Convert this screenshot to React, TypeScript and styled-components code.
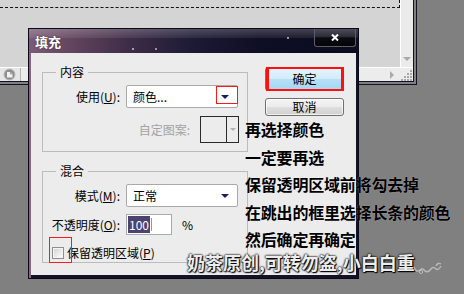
import React from "react";
import styled, { createGlobalStyle } from "styled-components";

const UI_FONT = `"Noto Sans CJK SC", "Noto Sans", "Liberation Sans", sans-serif`;

const GlobalStyle = createGlobalStyle`
  html, body { margin: 0; padding: 0; }
  body {
    background: #808080;
    width: 464px;
    height: 294px;
    overflow: hidden;
    font-family: ${UI_FONT};
  }
  * { box-sizing: border-box; }
`;

const Desktop = styled.div`
  position: relative;
  width: 464px;
  height: 294px;
  background: #808080;
  overflow: hidden;
`;

/* ---------- document window behind ---------- */
const DocWindow = styled.div`
  width: 417px;
  height: 85px;
  display: grid;
  grid-template-columns: 400px 13px;
  grid-template-rows: 67px 14px;
  border-right: 4px double #121222;
  border-bottom: 4px double #121222;
  background: #808080;
`;

const Canvas = styled.div`
  background: #d4d4d4;
`;

const Selection = styled.div`
  width: 400px;
  height: 8px;
  border-bottom: 1px dashed #111;
  border-right: 1px dashed #111;
`;

const VScroll = styled.div`
  background: #ebebeb;
  border-left: 1px solid #ffffff;
  display: flex;
  flex-direction: column;
  justify-content: flex-end;
  align-items: center;
  padding-bottom: 6px;
`;

const ArrowDown = styled.div<{ $color?: string; $size?: number }>`
  width: 0;
  height: 0;
  border-left: ${(p) => p.$size ?? 4}px solid transparent;
  border-right: ${(p) => p.$size ?? 4}px solid transparent;
  border-top: ${(p) => p.$size ?? 4}px solid ${(p) => p.$color ?? "#a9a9a9"};
`;

const StatusBar = styled.div`
  background: #e6e6e6;
  border-top: 1px solid #ffffff;
  display: flex;
  align-items: stretch;
`;

const StatusIconCell = styled.div`
  width: 21px;
  border-right: 1px solid #b4b4b4;
  display: flex;
  align-items: center;
  padding-left: 3px;
`;

const StatusRest = styled.div`
  flex: 1;
  display: flex;
  align-items: center;
  justify-content: flex-end;
  padding-right: 6px;
  background: #ececec;
`;

const ArrowRight = styled.div`
  width: 0;
  height: 0;
  border-top: 4px solid transparent;
  border-bottom: 4px solid transparent;
  border-left: 4px solid #a9a9a9;
`;

const Grip = styled.div`
  background: #ececec;
  border-top: 1px solid #ffffff;
  display: flex;
  align-items: flex-end;
  justify-content: flex-end;
`;

/* ---------- dialog ---------- */
const Dialog = styled.div`
  position: absolute;
  left: 28px;
  top: 28px;
  width: 331px;
  height: 251px;
  border: 1px solid #0b0b18;
  display: flex;
  flex-direction: column;
  font-family: ${UI_FONT};
  font-size: 12px;
  color: #000;
`;

const TitleBar = styled.div`
  height: 24px;
  flex: none;
  display: flex;
  align-items: flex-start;
  background:
    radial-gradient(circle at 104px 20px, rgba(255,255,255,0.55) 0 0.8px, transparent 1.4px),
    radial-gradient(circle at 127px 20px, rgba(255,255,255,0.5) 0 0.8px, transparent 1.4px),
    radial-gradient(circle at 259px 9px, rgba(255,255,255,0.55) 0 0.8px, transparent 1.4px),
    linear-gradient(180deg, rgba(255,255,255,0.22) 0, rgba(255,255,255,0.08) 36%, rgba(0,0,0,0) 40%),
    linear-gradient(90deg, #7c5b78 0, #64465f 12%, #3e2d48 30%, #1c1a34 50%, #0e0e24 70%, #0c0c20 100%);
`;

const Title = styled.div`
  color: #ffffff;
  font-weight: 700;
  font-size: 13px;
  line-height: 16px;
  padding: 5px 0 0 6px;
  text-shadow: 0 0 2px rgba(0, 0, 0, 0.5);
`;

const CloseBtn = styled.div`
  margin-left: auto;
  margin-right: 2px;
  width: 42px;
  height: 18px;
  border: 1px solid #5d5d68;
  border-top: none;
  border-radius: 0 0 3px 3px;
  background: linear-gradient(180deg, #4c4c58 0, #2c2c38 45%, #0a0a10 52%, #050508 100%);
  display: flex;
  align-items: center;
  justify-content: center;
`;

const Frame = styled.div`
  flex: 1;
  padding: 0 2px 3px 2px;
  background: linear-gradient(90deg, #86667f 0 2px, #121228 2px);
  display: flex;
`;

const Body = styled.div`
  flex: 1;
  background: #ececec;
  display: flex;
  align-items: flex-start;
  padding: 19px 0 0 11px;
`;

const Groups = styled.div`
  width: 206px;
  display: flex;
  flex-direction: column;
  gap: 19px;
`;

const GroupBox = styled.div<{ $h: number }>`
  position: relative;
  height: ${(p) => p.$h}px;
  border: 1px solid #bcbcbc;
  padding: 12px 8px 0 0;
  display: grid;
  grid-template-columns: 77px 1fr;
  column-gap: 6px;
  align-content: start;
`;

const Legend = styled.span`
  position: absolute;
  top: -8px;
  left: 13px;
  padding: 0 4px;
  background: #ececec;
  line-height: 14px;
  font-size: 12px;
`;

const Label = styled.div<{ $mt?: number }>`
  text-align: right;
  align-self: center;
  white-space: nowrap;
  line-height: 14px;
  margin-top: ${(p) => p.$mt ?? 0}px;
`;

const U = styled.span`
  text-decoration: underline;
`;

const Select = styled.div<{ $mt?: number }>`
  position: relative;
  width: 112px;
  height: 23px;
  background: #ffffff;
  border: 1px solid #a9a9a9;
  border-radius: 2px;
  display: flex;
  align-items: center;
  padding-left: 6px;
  margin-top: ${(p) => p.$mt ?? 0}px;
`;

const SelectText = styled.span`
  flex: 1;
  line-height: 14px;
`;

const ArrowZone = styled.div`
  position: relative;
  width: 22px;
  height: 100%;
  display: flex;
  align-items: center;
  justify-content: center;
  padding-right: 2px;
`;

const RedMark = styled.div<{ $w?: number }>`
  position: absolute;
  border: ${(p) => p.$w ?? 1}px solid #ff1a1a;
  pointer-events: none;
`;

const ArrowMark = styled(RedMark)`
  top: 0;
  right: -1px;
  width: 22px;
  height: 18px;
`;

const SpanRow = styled.div<{ $mt?: number; $justify?: string; $pl?: number }>`
  grid-column: 1 / -1;
  display: flex;
  align-items: center;
  justify-content: ${(p) => p.$justify ?? "flex-start"};
  gap: 10px;
  margin-top: ${(p) => p.$mt ?? 0}px;
  padding-left: ${(p) => p.$pl ?? 0}px;
`;

const Disabled = styled.span`
  color: #a3a3a3;
  line-height: 14px;
`;

const PatternBox = styled.div`
  width: 39px;
  height: 27px;
  border: 1px solid #2a2a2a;
  display: flex;
  justify-content: flex-end;
`;

const PatternArrow = styled.div`
  width: 12px;
  border-left: 1px solid #2a2a2a;
  display: flex;
  align-items: center;
  justify-content: center;
`;

const OpacityRow = styled.div`
  display: flex;
  align-items: center;
  gap: 10px;
  margin-top: 7px;
`;

const Input = styled.div`
  width: 46px;
  height: 21px;
  background: #ffffff;
  border: 1px solid #a5acb5;
  display: flex;
  align-items: stretch;
  padding: 1px;
`;

const Highlight = styled.span`
  background: #4b4270;
  color: #ffffff;
  padding: 0 1px;
  line-height: 17px;
`;

const Caret = styled.span`
  width: 1px;
  background: #86a86a;
  margin: 2px 0 2px 1px;
`;

const CheckWrap = styled.div`
  position: relative;
  display: flex;
  align-items: center;
  gap: 3px;
`;

const CheckBox = styled.div`
  width: 12px;
  height: 12px;
  border: 1px solid #8e8f8f;
  background: linear-gradient(135deg, #cfcfcf 0, #e8e8e8 50%, #ffffff 100%);
  box-shadow: inset 0 0 0 1px #f4f4f4;
`;

const CheckMark = styled(RedMark)`
  left: -3px;
  top: -7px;
  width: 23px;
  height: 26px;
`;

const ButtonCol = styled.div`
  margin-left: 17px;
  margin-top: -5px;
  display: flex;
  flex-direction: column;
  gap: 7px;
`;

const Button = styled.div<{ $primary?: boolean }>`
  position: relative;
  width: 79px;
  height: ${(p) => (p.$primary ? 24 : 18)}px;
  border: 1px solid ${(p) => (p.$primary ? "#3c7fb1" : "#707070")};
  border-radius: 3px;
  display: flex;
  align-items: center;
  justify-content: center;
  font-size: 12px;
  line-height: 14px;
  background: ${(p) =>
    p.$primary
      ? "linear-gradient(180deg, #e6f4fc 0, #d3ecfa 48%, #b6e0f7 52%, #a4d6f3 100%)"
      : "linear-gradient(180deg, #f4f4f4 0, #ececec 48%, #dedede 52%, #d0d0d0 100%)"};
  box-shadow: inset 0 0 0 1px rgba(255, 255, 255, 0.7);
`;

const OkMark = styled.div`
  position: absolute;
  top: -1px;
  left: 0;
  right: -1px;
  bottom: -1px;
  border-style: solid;
  border-color: #ff1010;
  border-width: 2px 3px 2px 3px;
`;

/* ---------- annotations ---------- */
const Notes = styled.div`
  position: absolute;
  left: 245px;
  top: 116px;
  font-family: ${UI_FONT};
  font-weight: 700;
  font-size: 16px;
  letter-spacing: -0.2px;
  line-height: 27.5px;
  color: #000;
  white-space: nowrap;
  text-shadow: 0 0 1px rgba(255, 255, 255, 0.6);
`;

const NoteLine = styled.div`
  height: 27.5px;
`;

const Watermark = styled.div`
  position: absolute;
  left: 187px;
  top: 253px;
  display: flex;
  align-items: flex-end;
  font-family: ${UI_FONT};
  font-weight: 700;
  font-size: 18px;
  line-height: 18px;
  color: #ededed;
  white-space: nowrap;
  text-shadow: 0 0 2px #000, 0 0 2px #000, 1px 1px 1px #000;
`;

const Swirl = styled.svg`
  margin-left: -3px;
  margin-bottom: -4px;
`;

export default function App() {
  return (
    <Desktop>
      <GlobalStyle />
      <DocWindow>
        <Canvas>
          <Selection />
        </Canvas>
        <VScroll>
          <ArrowDown />
        </VScroll>
        <StatusBar>
          <StatusIconCell>
            <svg width="13" height="13" viewBox="0 0 13 13">
              <circle cx="6.5" cy="6.5" r="5.5" fill="#8f8f8f" stroke="#bdbdbd" strokeWidth="1" />
              <path d="M4 4 H7.5 L9.5 6 V9.5 H4 Z" fill="#f2f2f2" />
              <path d="M7.5 4 V6 H9.5" fill="none" stroke="#8f8f8f" strokeWidth="0.8" />
            </svg>
          </StatusIconCell>
          <StatusRest>
            <ArrowRight />
          </StatusRest>
        </StatusBar>
        <Grip>
          <svg width="12" height="12" viewBox="0 0 12 12">
            {[
              [9, 1],
              [6, 4],
              [9, 4],
              [3, 7],
              [6, 7],
              [9, 7],
              [0, 10],
              [3, 10],
              [6, 10],
              [9, 10],
            ].map(([x, y], i) => (
              <rect key={i} x={x} y={y} width="2" height="2" fill="#a8a8a8" />
            ))}
          </svg>
        </Grip>
      </DocWindow>

      <Dialog>
        <TitleBar>
          <Title>填充</Title>
          <CloseBtn>
            <svg width="8" height="7" viewBox="0 0 8 7">
              <path d="M1 0.5 L7 6.5 M7 0.5 L1 6.5" stroke="#ffffff" strokeWidth="2" />
            </svg>
          </CloseBtn>
        </TitleBar>
        <Frame>
          <Body>
            <Groups>
              <GroupBox $h={80}>
                <Legend>内容</Legend>
                <Label>
                  使用(<U>U</U>):
                </Label>
                <Select>
                  <SelectText>颜色...</SelectText>
                  <ArrowZone>
                    <ArrowDown $color="#1a1a6c" />
                  </ArrowZone>
                  <ArrowMark />
                </Select>
                <SpanRow $mt={8} $justify="flex-end">
                  <Disabled>自定图案:</Disabled>
                  <PatternBox>
                    <PatternArrow>
                      <ArrowDown $color="#b0b0b0" $size={3} />
                    </PatternArrow>
                  </PatternBox>
                </SpanRow>
              </GroupBox>

              <GroupBox $h={92}>
                <Legend>混合</Legend>
                <Label>
                  模式(<U>M</U>):
                </Label>
                <Select>
                  <SelectText>正常</SelectText>
                  <ArrowZone>
                    <ArrowDown $color="#1a1a6c" />
                  </ArrowZone>
                </Select>
                <Label $mt={7}>
                  不透明度(<U>O</U>):
                </Label>
                <OpacityRow>
                  <Input>
                    <Highlight>100</Highlight>
                    <Caret />
                  </Input>
                  <span>%</span>
                </OpacityRow>
                <SpanRow $mt={9} $pl={9}>
                  <CheckWrap>
                    <CheckBox />
                    <span>
                      保留透明区域(<U>P</U>)
                    </span>
                    <CheckMark />
                  </CheckWrap>
                </SpanRow>
              </GroupBox>
            </Groups>

            <ButtonCol>
              <Button $primary>
                确定
                <OkMark />
              </Button>
              <Button>取消</Button>
            </ButtonCol>
          </Body>
        </Frame>
      </Dialog>

      <Notes>
        <NoteLine>再选择颜色</NoteLine>
        <NoteLine>一定要再选</NoteLine>
        <NoteLine>保留透明区域前将勾去掉</NoteLine>
        <NoteLine>在跳出的框里选择长条的颜色</NoteLine>
        <NoteLine>然后确定再确定</NoteLine>
      </Notes>

      <Watermark>
        <span>奶茶原创,可转勿盗,小白白重</span>
        <Swirl width="34" height="16" viewBox="0 0 34 16">
          <path
            d="M2 8 q2 6 6 3 q2 -2 4 0 q3 4 7 -1 q2 -3 5 0 q2 2 5 -3 M24 7 q2 -4 5 -2"
            fill="none"
            stroke="rgba(205,205,205,0.75)"
            strokeWidth="1.4"
          />
          <circle cx="9" cy="13" r="1.6" fill="none" stroke="rgba(205,205,205,0.7)" strokeWidth="1" />
        </Swirl>
      </Watermark>
    </Desktop>
  );
}
